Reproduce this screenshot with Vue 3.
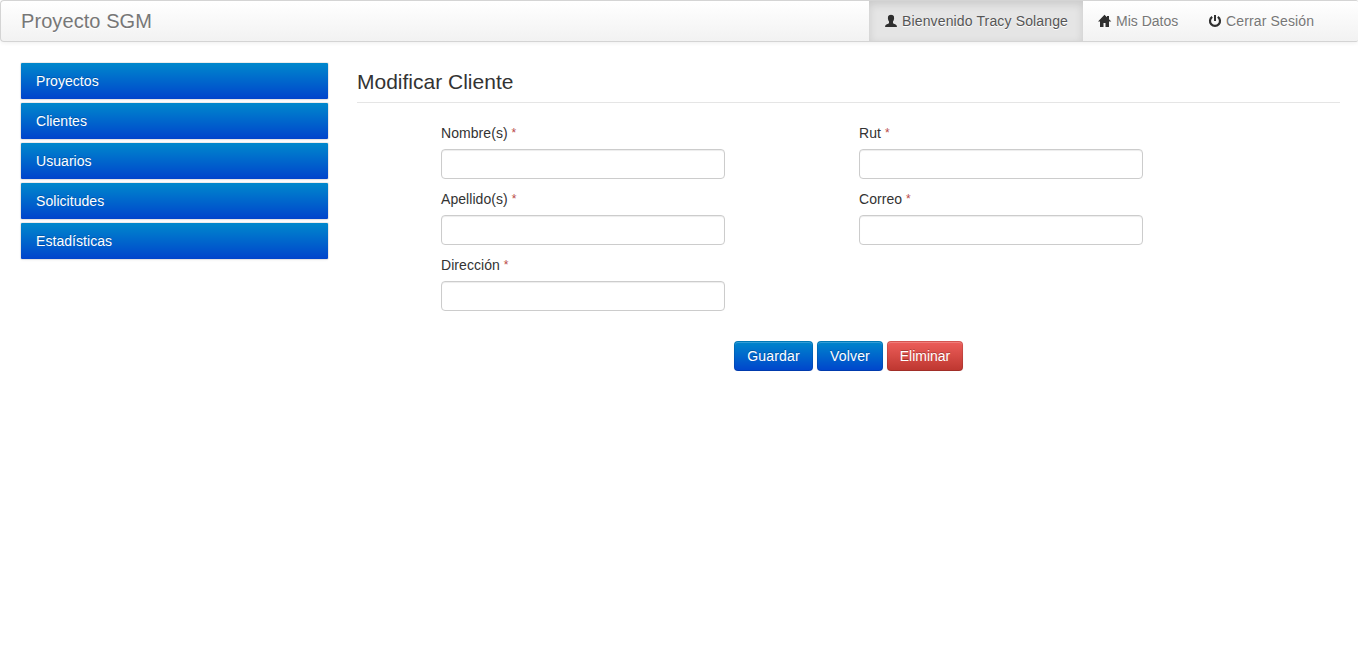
<script setup>
const menu = ['Proyectos', 'Clientes', 'Usuarios', 'Solicitudes', 'Estadísticas']
const columns = [
  [
    { id: 'nombre', label: 'Nombre(s)' },
    { id: 'apellido', label: 'Apellido(s)' },
    { id: 'direccion', label: 'Dirección' },
  ],
  [
    { id: 'rut', label: 'Rut' },
    { id: 'correo', label: 'Correo' },
  ],
]
</script>

<template>
  <div class="page">
    <header class="navbar">
      <a class="brand">Proyecto SGM</a>
      <nav class="nav">
        <a class="link active">
          <svg class="icon" viewBox="0 0 14 14"><path d="M5 1.200Q7 .4 9 1.200Q10.400 2 10.100 4.500Q9.900 6.500 9 7.500V9Q9.300 9.700 11.200 10.200Q13 10.800 13 13H1Q1 10.800 2.800 10.200Q4.700 9.700 5 9V7.500Q4.100 6.500 3.900 4.500Q3.600 2 5 1.200z" /></svg>
          <span>Bienvenido Tracy Solange</span>
        </a>
        <a class="link home">
          <svg class="icon" viewBox="0 0 14 14"><path d="M6.500 .8L0 7.600h2V13h3.500V9h2v4H11V7.600h2.300L11 5.200V2H9v1.300z" /></svg>
          <span>Mis Datos</span>
        </a>
        <a class="link logout">
          <svg class="icon" viewBox="0 0 14 14"><path d="M4.200 2.800A5 5 0 1 0 9.800 2.800" fill="none" stroke="#2f2f2f" stroke-width="2.200" /><path d="M6 1h2v6H6z" /></svg>
          <span>Cerrar Sesión</span>
        </a>
      </nav>
    </header>

    <div class="body">
      <aside class="sidebar">
        <a v-for="item in menu" :key="item" class="entry">{{ item }}</a>
      </aside>
      <main class="content">
        <h1 class="title">Modificar Cliente</h1>
        <form @submit.prevent>
          <div class="columns">
            <div v-for="(column, i) in columns" :key="i" class="column">
              <div v-for="field in column" :key="field.id" class="field">
                <label :for="field.id">{{ field.label }} <span class="required">*</span></label>
                <input :id="field.id" type="text" />
              </div>
            </div>
          </div>
          <div class="actions">
            <button class="btn save" type="button">Guardar</button>
            <button class="btn back" type="button">Volver</button>
            <button class="btn danger" type="button">Eliminar</button>
          </div>
        </form>
      </main>
    </div>
  </div>
</template>

<style>
body {
  margin: 0;
  background: #fff;
}
</style>

<style scoped>
.page {
  font-family: "Liberation Sans", Arial, sans-serif;
  font-size: 14px;
  line-height: 20px;
  color: #333;
}
.navbar {
  box-sizing: border-box;
  display: flex;
  justify-content: space-between;
  height: 42px;
  padding: 0 29px 0 20px;
  border: 1px solid #d4d4d4;
  border-right: 0;
  border-radius: 4px 2px 2px 4px;
  background: linear-gradient(#fff, #f2f2f2);
  box-shadow: 0 1px 4px rgba(0, 0, 0, 0.065);
}
.brand {
  padding-top: 10px;
  font-size: 20px;
  letter-spacing: 0.08px;
  color: #777;
  text-shadow: 0 1px 0 #fff;
}
.nav {
  display: flex;
}
.link {
  display: flex;
  box-sizing: border-box;
  height: 40px;
  padding: 10px 0 10px 15px;
  color: #777;
  white-space: nowrap;
  text-shadow: 0 1px 0 #fff;
}
.link.active {
  width: 214px;
  letter-spacing: 0.14px;
  color: #555;
  background: #e5e5e5;
  box-shadow: inset 0 3px 8px rgba(0, 0, 0, 0.125);
}
.home {
  width: 110px;
}
.logout {
  width: 136px;
  letter-spacing: 0.14px;
}
.icon {
  width: 14px;
  height: 14px;
  margin: 3px 4px 0 0;
  fill: #2f2f2f;
}
.body {
  display: flex;
  padding: 21px 18px 0 21px;
}
.sidebar {
  display: flex;
  flex-direction: column;
  gap: 4px;
  width: 307px;
  margin-right: 29px;
}
.entry {
  box-sizing: border-box;
  height: 36px;
  padding: 8px 15px;
  border-radius: 1px;
  color: #fff;
  letter-spacing: 0.05px;
  text-shadow: 0 -1px 0 rgba(0, 0, 0, 0.2);
  background: linear-gradient(#08c, #04c);
  box-shadow: 0 0 0 1px rgba(0, 0, 0, 0.065), 0 1px 3px rgba(0, 0, 0, 0.065);
}
.content {
  flex: 1;
}
.title {
  box-sizing: border-box;
  height: 40px;
  margin: 0 0 20px;
  border-bottom: 1px solid #e5e5e5;
  font-size: 21px;
  font-weight: 400;
  line-height: 38px;
}
.columns {
  display: flex;
  gap: 134px;
  padding-left: 84px;
}
.column {
  width: 284px;
}
.field {
  height: 66px;
}
.field label {
  display: block;
  height: 20px;
  margin-bottom: 6px;
  letter-spacing: 0.06px;
}
.required {
  display: inline-block;
  height: 20px;
  font-size: 12px;
  line-height: 20px;
  vertical-align: top;
  color: #b94a48;
}
.field input {
  display: block;
  box-sizing: border-box;
  width: 284px;
  height: 30px;
  padding: 4px 6px;
  border: 1px solid #ccc;
  border-radius: 4px;
  background: #fff;
  font: inherit;
  color: #555;
  box-shadow: inset 0 1px 1px rgba(0, 0, 0, 0.075);
}
.actions {
  display: flex;
  gap: 4px;
  padding: 20px 0 0 377px;
}
.btn {
  box-sizing: border-box;
  height: 30px;
  padding: 0;
  border: 1px solid;
  border-color: rgba(0, 0, 0, 0.1) rgba(0, 0, 0, 0.1) rgba(0, 0, 0, 0.15);
  border-radius: 4px;
  font: inherit;
  text-align: center;
  letter-spacing: 0.15px;
  color: #fff;
  text-shadow: 0 -1px 0 rgba(0, 0, 0, 0.25);
  background: linear-gradient(#08c, #04c) border-box;
  box-shadow: inset 0 1px 0 rgba(255, 255, 255, 0.2), 0 1px 2px rgba(0, 0, 0, 0.05);
}
.save {
  width: 79px;
}
.back {
  width: 66px;
}
.danger {
  width: 76px;
  letter-spacing: 0;
  background: linear-gradient(#ee5f5b, #bd362f) border-box;
}
</style>
